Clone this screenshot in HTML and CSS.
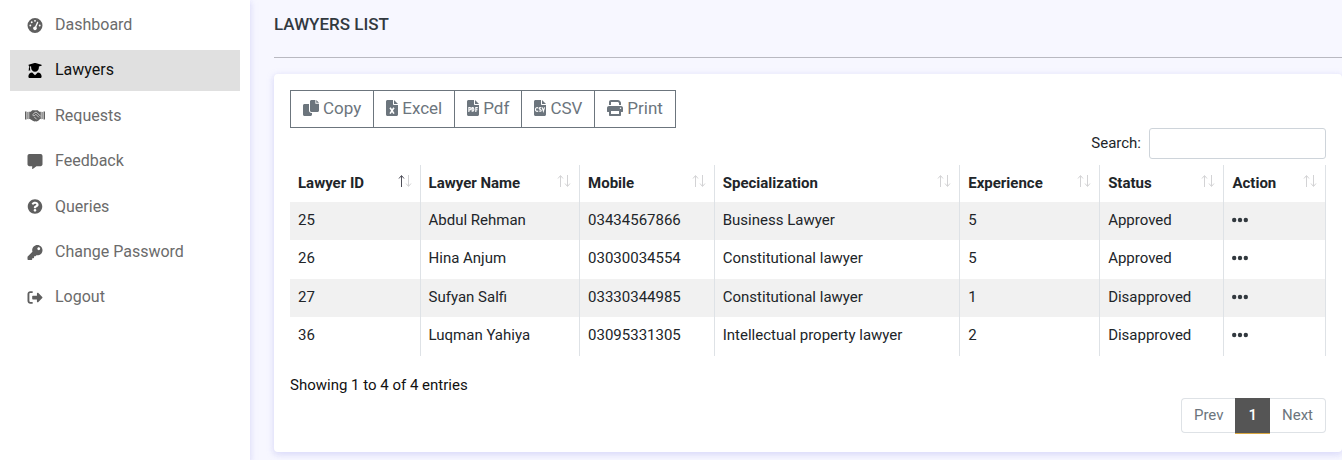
FILE: index.html
```html
<!DOCTYPE html>
<html lang="en">
<head>
<meta charset="utf-8">
<title>Lawyers List</title>
<link rel="stylesheet" href="styles.css">
</head>
<body>
<svg class="sprite" aria-hidden="true">
  <symbol id="i-gauge" viewBox="0 0 512 512"><path fill-rule="evenodd" d="M0 256a256 256 0 1 1 512 0A256 256 0 1 1 0 256zM288 96a32 32 0 1 0-64 0 32 32 0 1 0 64 0zM256 416c35.300 0 64-28.700 64-64 0-17.400-6.900-33.100-18.100-44.600L366 161.700c5.300-12.100-.2-26.300-12.300-31.600s-26.300 .2-31.600 12.300L257.900 288H256c-35.300 0-64 28.700-64 64s28.700 64 64 64zM176 144a32 32 0 1 0-64 0 32 32 0 1 0 64 0zM96 288a32 32 0 1 0 0-64 32 32 0 1 0 0 64zm352-32a32 32 0 1 0-64 0 32 32 0 1 0 64 0z"/></symbol>
  <symbol id="i-graduate" viewBox="0 0 448 512"><path d="M320 320L224 420l-96-100C57 324 0 376 0 440v30c0 24 20 42 44 42h360c24 0 44-18 44-42v-30c0-64-57-116-128-120zM4 60v30l18 8v60c-8 5-12 12-12 20 0 7 4 14 10 18L2 256h64l-16-60c6-4 10-11 10-18 0-8-4-15-12-20v-50l44 12v40c0 76 60 136 132 136s132-60 132-136v-40l88-26c14-4 14-30 0-34L242 4c-12-4-24-4-36 0z"/></symbol>
  <symbol id="i-handshake" viewBox="0 0 640 384"><path d="M0 64h48v256H0zM592 64h48v256h-48zM76 76l36-6v240l-36-6zM564 76l-36-6v240l36-6zM134 72h50l48-52h70l18 10 18-10h70l48 52h50v232h-24l-58 54-54 22-36-8-30 10-54-20-92-58h-24z"/><path d="M236 176l88-84 48-2 128 128M252 186c36 30 70 4 98-30l96 96M300 240l76 76" fill="none" stroke="#fff" stroke-width="22"/></symbol>
  <symbol id="i-message" viewBox="0 0 512 512"><path d="M448 0H64C28.700 0 0 28.700 0 64v288c0 35.300 28.700 64 64 64h96v84c0 9.800 11.200 15.500 19.100 9.700L304 416h144c35.300 0 64-28.700 64-64V64c0-35.300-28.700-64-64-64z"/></symbol>
  <symbol id="i-question" viewBox="0 0 512 512"><path d="M504 256c0 137-111 248-248 248S8 393 8 256C8 119.100 119 8 256 8s248 111.100 248 248zM262.700 90c-54.500 0-89.300 23-116.500 63.800-3.500 5.300-2.400 12.400 2.700 16.300l34.700 26.300c5.200 3.900 12.600 3 16.700-2.100 17.900-22.700 30.100-35.800 57.300-35.800 20.400 0 45.700 13.100 45.700 33 0 15-12.400 22.700-32.500 34C247.100 238.500 216 254.900 216 296v4c0 6.600 5.400 12 12 12h56c6.600 0 12-5.400 12-12v-1.300c0-28.500 83.200-29.600 83.200-106.700 0-58-60.200-102-116.500-102zM256 338c-25.400 0-46 20.600-46 46 0 25.400 20.600 46 46 46s46-20.600 46-46c0-25.400-20.600-46-46-46z"/></symbol>
  <symbol id="i-key" viewBox="0 0 512 512"><path d="M512 176c0 97.200-78.800 176-176 176-11.200 0-22.200-1.100-32.800-3.100l-24 27A24 24 0 0 1 261.200 384H224v40c0 13.300-10.700 24-24 24h-40v40c0 13.300-10.700 24-24 24H24c-13.300 0-24-10.700-24-24v-78.100c0-6.400 2.500-12.500 7-17l161.800-161.800C163 213.800 160 195.300 160 176 160 78.800 238.800 0 336 0s176 78.500 176 176zM336 128c0 26.500 21.500 48 48 48s48-21.500 48-48-21.500-48-48-48-48 21.500-48 48z"/></symbol>
  <symbol id="i-logout" viewBox="0 0 512 512"><path d="M176 40H96C43 40 0 83 0 136v240c0 53 43 96 96 96h80v-64H96c-17.700 0-32-14.300-32-32V136c0-17.700 14.300-32 32-32h80z"/><path d="M504 273L363 414c-15 15-41 4-41-17v-77H184c-13 0-24-11-24-24v-80c0-13 11-24 24-24h138v-77c0-21 26-32 41-17l141 141c10 9 10 24 0 34z"/></symbol>
  <symbol id="i-copy" viewBox="0 0 512 512"><path d="M272 0h124v116h116v220c0 26-22 48-48 48H272c-26 0-48-22-48-48V48c0-26 22-48 48-48zM424 0l88 88h-88zM48 128h144v208c0 44 36 80 80 80h16v48c0 26-22 48-48 48H48c-26 0-48-22-48-48V176c0-26 22-48 48-48z"/></symbol>
  <symbol id="i-file" viewBox="0 0 384 512"><path d="M48 0h176v136c0 13 11 24 24 24h136v304c0 26-22 48-48 48H48c-26 0-48-22-48-48V48C0 22 22 0 48 0zM256 0l128 128H256z"/></symbol>
  <symbol id="i-excel" viewBox="0 0 384 512"><use href="#i-file"/><path d="M130 246l124 190M254 246L130 436" fill="none" stroke="#fff" stroke-width="52"/></symbol>
  <symbol id="i-pdf" viewBox="0 0 384 512"><use href="#i-file"/><path d="M60 384V244h32c50 0 50 72 0 72H60M166 244v116h14c52 0 52-116 0-116zM282 384V244h64M282 310h56" fill="none" stroke="#fff" stroke-width="36"/></symbol>
  <symbol id="i-csv" viewBox="0 0 384 512"><use href="#i-file"/><path d="M128 264c-16-30-82-26-82 40s66 70 82 40M232 258c-22-22-66-16-66 12 0 34 66 30 66 64 0 30-50 36-72 10M264 236l36 120 38-120" fill="none" stroke="#fff" stroke-width="36"/></symbol>
  <symbol id="i-print" viewBox="0 0 512 512"><path d="M128 0h226c17 0 33 7 45 19l30 30c12 12 19 28 19 45v66h-64V94l-30-30H128v96H64V64c0-35 29-64 64-64z"/><path fill-rule="evenodd" d="M64 192h384c35 0 64 29 64 64v112c0 9-7 16-16 16h-48v96c0 18-14 32-32 32H96c-18 0-32-14-32-32v-96H16c-9 0-16-7-16-16V256c0-35 29-64 64-64zm64 160v96h256v-96zm304-64a24 24 0 1 0 0-48 24 24 0 0 0 0 48z"/></symbol>
  <symbol id="i-sort" viewBox="0 0 14 14"><path class="sort-up" d="M3.500 13V2M1 4.500L3.500 1.500 6 4.500"/><path class="sort-down" d="M10.500 1v11M8 9.500l2.500 3 2.500-3"/></symbol>
  <symbol id="i-dots" viewBox="0 0 16 6"><circle cx="2.200" cy="3" r="2.200"/><circle cx="8" cy="3" r="2.200"/><circle cx="13.800" cy="3" r="2.200"/></symbol>
</svg>
<div class="layout">
  <nav class="sidebar" aria-label="Main">
    <a class="nav-link" href="#"><svg class="nav-icon"><use href="#i-gauge"/></svg>Dashboard</a>
    <a class="nav-link active" href="#" aria-current="page"><svg class="nav-icon"><use href="#i-graduate"/></svg>Lawyers</a>
    <a class="nav-link" href="#"><svg class="nav-icon"><use href="#i-handshake"/></svg>Requests</a>
    <a class="nav-link" href="#"><svg class="nav-icon"><use href="#i-message"/></svg>Feedback</a>
    <a class="nav-link" href="#"><svg class="nav-icon"><use href="#i-question"/></svg>Queries</a>
    <a class="nav-link" href="#"><svg class="nav-icon"><use href="#i-key"/></svg>Change Password</a>
    <a class="nav-link" href="#"><svg class="nav-icon"><use href="#i-logout"/></svg>Logout</a>
  </nav>
  <main class="content">
    <h1 class="page-title">LAWYERS LIST</h1>
    <section class="card">
      <div class="exports">
        <button class="export" type="button"><svg class="export-icon wide"><use href="#i-copy"/></svg>Copy</button>
        <button class="export" type="button"><svg class="export-icon"><use href="#i-excel"/></svg>Excel</button>
        <button class="export" type="button"><svg class="export-icon"><use href="#i-pdf"/></svg>Pdf</button>
        <button class="export" type="button"><svg class="export-icon"><use href="#i-csv"/></svg>CSV</button>
        <button class="export" type="button"><svg class="export-icon wide"><use href="#i-print"/></svg>Print</button>
      </div>
      <div class="search">
        <label for="search">Search:</label>
        <input class="search-input" id="search" type="search">
      </div>
      <table class="table">
        <colgroup><col class="col-id"><col class="col-name"><col class="col-mobile"><col class="col-spec"><col class="col-exp"><col class="col-status"><col class="col-action"></colgroup>
        <thead>
          <tr>
            <th aria-sort="ascending"><div class="head">Lawyer ID<svg class="sort sorted"><use href="#i-sort"/></svg></div></th>
            <th><div class="head">Lawyer Name<svg class="sort"><use href="#i-sort"/></svg></div></th>
            <th><div class="head">Mobile<svg class="sort"><use href="#i-sort"/></svg></div></th>
            <th><div class="head">Specialization<svg class="sort"><use href="#i-sort"/></svg></div></th>
            <th><div class="head">Experience<svg class="sort"><use href="#i-sort"/></svg></div></th>
            <th><div class="head">Status<svg class="sort"><use href="#i-sort"/></svg></div></th>
            <th><div class="head">Action<svg class="sort"><use href="#i-sort"/></svg></div></th>
          </tr>
        </thead>
        <tbody>
          <tr><td>25</td><td>Abdul Rehman</td><td>03434567866</td><td>Business Lawyer</td><td>5</td><td>Approved</td><td><button class="more" type="button" aria-label="Actions for Abdul Rehman"><svg class="dots"><use href="#i-dots"/></svg></button></td></tr>
          <tr><td>26</td><td>Hina Anjum</td><td>03030034554</td><td>Constitutional lawyer</td><td>5</td><td>Approved</td><td><button class="more" type="button" aria-label="Actions for Hina Anjum"><svg class="dots"><use href="#i-dots"/></svg></button></td></tr>
          <tr><td>27</td><td>Sufyan Salfi</td><td>03330344985</td><td>Constitutional lawyer</td><td>1</td><td>Disapproved</td><td><button class="more" type="button" aria-label="Actions for Sufyan Salfi"><svg class="dots"><use href="#i-dots"/></svg></button></td></tr>
          <tr><td>36</td><td>Luqman Yahiya</td><td>03095331305</td><td>Intellectual property lawyer</td><td>2</td><td>Disapproved</td><td><button class="more" type="button" aria-label="Actions for Luqman Yahiya"><svg class="dots"><use href="#i-dots"/></svg></button></td></tr>
        </tbody>
      </table>
      <p class="info">Showing 1 to 4 of 4 entries</p>
      <nav class="pagination" aria-label="Table pages">
        <a class="page" href="#">Prev</a>
        <a class="page current" href="#" aria-current="page">1</a>
        <a class="page" href="#">Next</a>
      </nav>
    </section>
  </main>
</div>
</body>
</html>
```

FILE: styles.css
```css
* { box-sizing: border-box; }

body {
  margin: 0;
  background: #f7f7ff;
  color: #212529;
  font: 15px/1.5 Roboto, "Liberation Sans", sans-serif;
}

.sprite { display: none; }

svg { fill: currentColor; }

.layout {
  display: flex;
  min-height: 100vh;
}

/* Sidebar */
.sidebar {
  display: flex;
  flex: 0 0 250px;
  flex-direction: column;
  gap: 5px;
  padding: 5px 10px;
  background: #fff;
  box-shadow: 0 2px 6px rgba(218, 218, 253, 0.65), 0 2px 6px rgba(206, 206, 238, 0.54);
}

.nav-link {
  display: flex;
  align-items: center;
  gap: 10px;
  padding: 9px 15px;
  color: #6b6b6b;
  font-size: 16px;
  line-height: 1.4;
  text-decoration: none;
}

.nav-link.active {
  background: #e0e0e0;
  color: #111;
}

.nav-icon {
  width: 20px;
  height: 15px;
  color: #5f5f5f;
}

.active .nav-icon { color: #000; }

/* Page */
.content {
  flex: 1;
  min-width: 0;
  padding: 12px 0 8px 24px;
}

.page-title {
  margin: 0 0 16px;
  padding-bottom: 21px;
  border-bottom: 1px solid #b9b9c1;
  color: #32393f;
  font-size: 17px;
  font-weight: 500;
  line-height: 24px;
}

.card {
  padding: 16px 16px 19px;
  border-radius: 4px;
  background: #fff;
  box-shadow: 0 2px 6px rgba(218, 218, 253, 0.65), 0 2px 6px rgba(206, 206, 238, 0.54);
}

/* Export buttons */
.exports { display: flex; }

.export {
  display: flex;
  align-items: center;
  gap: 4px;
  margin: 0 -1px 0 0;
  padding: 5px 12px 7px;
  border: 1px solid #6c757d;
  background: transparent;
  color: #6c757d;
  font: 17px/24px Roboto, "Liberation Sans", sans-serif;
}

.export-icon {
  width: 12px;
  height: 16px;
}

.export-icon.wide { width: 16px; }

/* Search */
.search {
  display: flex;
  align-items: center;
  justify-content: flex-end;
  gap: 8px;
  margin-bottom: 6px;
}

.search-input {
  width: 177px;
  height: 31px;
  padding: 4px 8px;
  border: 1px solid #ced4da;
  border-radius: 3px;
  background: #fff;
  font: inherit;
}

/* Table */
.table {
  width: 100%;
  border-collapse: separate;
  border-spacing: 0;
  table-layout: fixed;
}

.col-id { width: 12.6%; }
.col-name { width: 15.4%; }
.col-mobile { width: 13%; }
.col-spec { width: 23.7%; }
.col-exp { width: 13.5%; }
.col-status { width: 12%; }
.col-action { width: 9.8%; }

.table th,
.table td {
  padding: 7px 8px 9px;
  border-right: 1px solid #dee2e6;
  text-align: left;
  white-space: nowrap;
}

.table th {
  padding-bottom: 7px;
  font-weight: 700;
}

.table tbody tr:nth-child(odd) { background: #f1f1f1; }

.head {
  display: flex;
  align-items: center;
  justify-content: space-between;
}

.sort {
  width: 14px;
  height: 14px;
  margin-bottom: 4px;
  fill: none;
  stroke: #d3d3d5;
  --up: #d3d3d5;
}

.sort.sorted { --up: #50505a; }

.sort-up { stroke: var(--up); }

.more {
  display: block;
  padding: 0;
  border: 0;
  background: none;
  color: #32393f;
}

.dots {
  display: block;
  width: 16px;
  height: 6px;
}

/* Footer */
.info {
  margin: 18px 0 2px;
  color: #111;
}

.pagination {
  display: flex;
  justify-content: flex-end;
}

.page {
  padding: 5px 12px;
  border: 1px solid #dee2e6;
  color: #6c757d;
  line-height: 23px;
  text-decoration: none;
}

.page:first-child {
  border-right: 0;
  border-radius: 4px 0 0 4px;
}

.page:last-child {
  border-left: 0;
  border-radius: 0 4px 4px 0;
}

.page.current {
  border-color: #555;
  background: #555;
  box-shadow: 0 1px 0 #d9a740;
  color: #fff;
  font-weight: 500;
}
```
